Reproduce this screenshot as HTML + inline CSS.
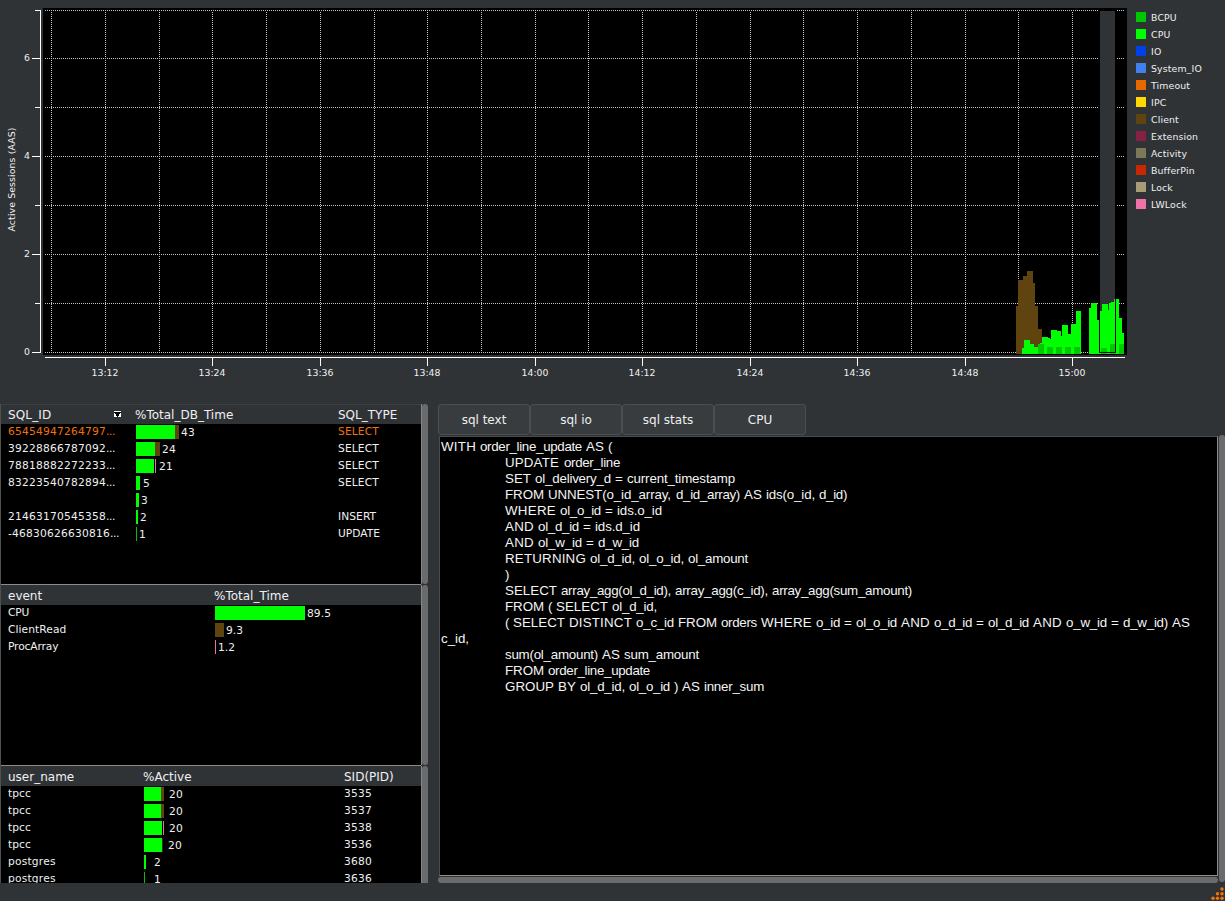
<!DOCTYPE html><html><head><meta charset="utf-8"><title>PASH Viewer</title><style>

html,body{margin:0;padding:0;}
body{width:1225px;height:901px;overflow:hidden;background:#2f3336;position:relative;
 font-family:"DejaVu Sans","Liberation Sans",sans-serif;color:#eff0f1;}
.abs{position:absolute;}
#chart{position:absolute;left:0;top:0;}
svg text{font-family:"DejaVu Sans","Liberation Sans",sans-serif;fill:#eff0f1;}
.panel{position:absolute;left:0;width:421px;overflow:hidden;background:#000;}
.hdr{position:absolute;left:1px;right:0;top:0;background:#2f3336;font-size:12px;white-space:nowrap;}
.hdr span{position:absolute;top:1px;}
.row{position:absolute;left:0;width:421px;height:17px;font-size:10.67px;white-space:nowrap;}
.row span{position:absolute;top:0;line-height:17px;}
.row i{position:absolute;top:1px;height:14px;display:block;}
.sel span{color:#f0700a;}
.tab{position:absolute;top:404px;width:90px;height:29px;border:1px solid #4b4f52;border-radius:3px;background:#383c3f;
 font-size:12px;line-height:31px;text-align:center;}
#sql{position:absolute;left:439px;top:436px;width:777px;height:438px;border:1px solid #4b4c4d;border-right-color:#8c8d8e;border-bottom-color:#8c8d8e;background:#000;overflow:hidden;}
#sql b{position:absolute;top:0;font-weight:normal;white-space:pre;}
#sql div{position:absolute;left:1px;width:776px;white-space:pre;font-family:"Liberation Sans",sans-serif;font-size:13.33px;line-height:16px;height:16px;color:#f4f4f4;}

</style></head><body>
<svg id="chart" width="1225" height="400" viewBox="0 0 1225 400" shape-rendering="crispEdges">
<rect x="43" y="8" width="1084" height="347" fill="#000"/>
<line x1="45" x2="1125" y1="10.5" y2="10.5" stroke="#c4c4c4" stroke-width="1" stroke-dasharray="1 1"/>
<line x1="45" x2="1125" y1="58.5" y2="58.5" stroke="#c4c4c4" stroke-width="1" stroke-dasharray="1 1"/>
<line x1="45" x2="1125" y1="107.5" y2="107.5" stroke="#c4c4c4" stroke-width="1" stroke-dasharray="1 1"/>
<line x1="45" x2="1125" y1="156.5" y2="156.5" stroke="#c4c4c4" stroke-width="1" stroke-dasharray="1 1"/>
<line x1="45" x2="1125" y1="205.5" y2="205.5" stroke="#c4c4c4" stroke-width="1" stroke-dasharray="1 1"/>
<line x1="45" x2="1125" y1="254.5" y2="254.5" stroke="#c4c4c4" stroke-width="1" stroke-dasharray="1 1"/>
<line x1="45" x2="1125" y1="303.5" y2="303.5" stroke="#c4c4c4" stroke-width="1" stroke-dasharray="1 1"/>
<line x1="45" x2="1125" y1="352.5" y2="352.5" stroke="#c4c4c4" stroke-width="1" stroke-dasharray="1 1"/>
<line x1="51.5" x2="51.5" y1="12" y2="351" stroke="#c4c4c4" stroke-width="1" stroke-dasharray="1 1"/>
<line x1="105.5" x2="105.5" y1="12" y2="351" stroke="#c4c4c4" stroke-width="1" stroke-dasharray="1 1"/>
<line x1="159.5" x2="159.5" y1="12" y2="351" stroke="#c4c4c4" stroke-width="1" stroke-dasharray="1 1"/>
<line x1="212.5" x2="212.5" y1="12" y2="351" stroke="#c4c4c4" stroke-width="1" stroke-dasharray="1 1"/>
<line x1="266.5" x2="266.5" y1="12" y2="351" stroke="#c4c4c4" stroke-width="1" stroke-dasharray="1 1"/>
<line x1="320.5" x2="320.5" y1="12" y2="351" stroke="#c4c4c4" stroke-width="1" stroke-dasharray="1 1"/>
<line x1="374.5" x2="374.5" y1="12" y2="351" stroke="#c4c4c4" stroke-width="1" stroke-dasharray="1 1"/>
<line x1="427.5" x2="427.5" y1="12" y2="351" stroke="#c4c4c4" stroke-width="1" stroke-dasharray="1 1"/>
<line x1="481.5" x2="481.5" y1="12" y2="351" stroke="#c4c4c4" stroke-width="1" stroke-dasharray="1 1"/>
<line x1="535.5" x2="535.5" y1="12" y2="351" stroke="#c4c4c4" stroke-width="1" stroke-dasharray="1 1"/>
<line x1="588.5" x2="588.5" y1="12" y2="351" stroke="#c4c4c4" stroke-width="1" stroke-dasharray="1 1"/>
<line x1="642.5" x2="642.5" y1="12" y2="351" stroke="#c4c4c4" stroke-width="1" stroke-dasharray="1 1"/>
<line x1="696.5" x2="696.5" y1="12" y2="351" stroke="#c4c4c4" stroke-width="1" stroke-dasharray="1 1"/>
<line x1="750.5" x2="750.5" y1="12" y2="351" stroke="#c4c4c4" stroke-width="1" stroke-dasharray="1 1"/>
<line x1="803.5" x2="803.5" y1="12" y2="351" stroke="#c4c4c4" stroke-width="1" stroke-dasharray="1 1"/>
<line x1="857.5" x2="857.5" y1="12" y2="351" stroke="#c4c4c4" stroke-width="1" stroke-dasharray="1 1"/>
<line x1="911.5" x2="911.5" y1="12" y2="351" stroke="#c4c4c4" stroke-width="1" stroke-dasharray="1 1"/>
<line x1="965.5" x2="965.5" y1="12" y2="351" stroke="#c4c4c4" stroke-width="1" stroke-dasharray="1 1"/>
<line x1="1018.5" x2="1018.5" y1="12" y2="351" stroke="#c4c4c4" stroke-width="1" stroke-dasharray="1 1"/>
<line x1="1072.5" x2="1072.5" y1="12" y2="351" stroke="#c4c4c4" stroke-width="1" stroke-dasharray="1 1"/>
<rect x="1099" y="10" width="17" height="343" fill="#000"/>
<rect x="1100" y="11" width="15" height="341" fill="#2f3336"/>
<polygon points="1016,354 1016,306 1018,306 1018,280 1023,280 1023,276 1027,276 1027,271 1033,271 1033,283 1035,283 1035,306 1038,306 1038,329 1042,329 1042,354" fill="#5f4410"/>
<polygon points="1022,354 1022,348 1024,348 1024,340 1030,340 1030,344 1034,344 1034,347 1038,347 1038,344 1040,344 1040,343 1042,343 1042,337 1048,337 1048,338 1050,338 1050,339 1051,339 1051,330 1057,330 1057,331 1061,331 1061,336 1062,336 1062,325 1068,325 1068,334 1071,334 1071,324 1076,324 1076,311 1081,311 1081,354" fill="#00ff00"/>
<polygon points="1089,354 1089,308 1091,308 1091,303 1097,303 1097,320 1100,320 1100,311 1102,311 1102,304 1108,304 1108,310 1109,310 1109,303 1111,303 1111,302 1114,302 1114,299 1119,299 1119,318 1122,318 1122,333 1124,333 1124,354" fill="#00ff00"/>
<rect x="1038" y="344" width="6" height="10" fill="#00c800"/>
<rect x="1047" y="347" width="6" height="7" fill="#00c800"/>
<rect x="1056" y="347" width="6" height="7" fill="#00c800"/>
<rect x="1065" y="347" width="6" height="7" fill="#00c800"/>
<rect x="1074" y="347" width="6" height="7" fill="#00c800"/>
<rect x="1101" y="348" width="6" height="6" fill="#00c800"/>
<rect x="1110" y="344" width="5" height="10" fill="#00c800"/>
<rect x="1119" y="344" width="5" height="10" fill="#00c800"/>
<rect x="1099" y="300" width="1" height="53" fill="#000"/>
<rect x="1115" y="295" width="1" height="58" fill="#000"/>
<rect x="1099" y="352" width="17" height="1" fill="#000"/>
<rect x="40" y="10" width="1" height="343" fill="#ffffff"/>
<rect x="35" y="10" width="5" height="1" fill="#ffffff"/>
<rect x="32" y="58" width="8" height="1" fill="#ffffff"/>
<rect x="35" y="107" width="5" height="1" fill="#ffffff"/>
<rect x="32" y="156" width="8" height="1" fill="#ffffff"/>
<rect x="35" y="205" width="5" height="1" fill="#ffffff"/>
<rect x="32" y="254" width="8" height="1" fill="#ffffff"/>
<rect x="35" y="303" width="5" height="1" fill="#ffffff"/>
<rect x="32" y="352" width="8" height="1" fill="#ffffff"/>
<rect x="45" y="357" width="1080" height="1" fill="#ffffff"/>
<rect x="105" y="357" width="1" height="9" fill="#ffffff"/>
<text x="105.0" y="376" font-size="9.33" letter-spacing="0.03" text-anchor="middle">13:12</text>
<rect x="212" y="357" width="1" height="9" fill="#ffffff"/>
<text x="212.0" y="376" font-size="9.33" letter-spacing="0.03" text-anchor="middle">13:24</text>
<rect x="320" y="357" width="1" height="9" fill="#ffffff"/>
<text x="320.0" y="376" font-size="9.33" letter-spacing="0.03" text-anchor="middle">13:36</text>
<rect x="427" y="357" width="1" height="9" fill="#ffffff"/>
<text x="427.0" y="376" font-size="9.33" letter-spacing="0.03" text-anchor="middle">13:48</text>
<rect x="535" y="357" width="1" height="9" fill="#ffffff"/>
<text x="535.0" y="376" font-size="9.33" letter-spacing="0.03" text-anchor="middle">14:00</text>
<rect x="642" y="357" width="1" height="9" fill="#ffffff"/>
<text x="642.0" y="376" font-size="9.33" letter-spacing="0.03" text-anchor="middle">14:12</text>
<rect x="750" y="357" width="1" height="9" fill="#ffffff"/>
<text x="750.0" y="376" font-size="9.33" letter-spacing="0.03" text-anchor="middle">14:24</text>
<rect x="857" y="357" width="1" height="9" fill="#ffffff"/>
<text x="857.0" y="376" font-size="9.33" letter-spacing="0.03" text-anchor="middle">14:36</text>
<rect x="965" y="357" width="1" height="9" fill="#ffffff"/>
<text x="965.0" y="376" font-size="9.33" letter-spacing="0.03" text-anchor="middle">14:48</text>
<rect x="1072" y="357" width="1" height="9" fill="#ffffff"/>
<text x="1072.0" y="376" font-size="9.33" letter-spacing="0.03" text-anchor="middle">15:00</text>
<text x="30" y="61" font-size="9.33" text-anchor="end">6</text>
<text x="30" y="159" font-size="9.33" text-anchor="end">4</text>
<text x="30" y="257" font-size="9.33" text-anchor="end">2</text>
<text x="30" y="355" font-size="9.33" text-anchor="end">0</text>
<text transform="translate(14.5,179.5) rotate(-90)" font-size="9.33" letter-spacing="0.12" text-anchor="middle">Active Sessions (AAS)</text>
<rect x="1136" y="12" width="10" height="10" fill="#00c800"/>
<text x="1151" y="21" font-size="9.33" letter-spacing="0.15">BCPU</text>
<rect x="1136" y="29" width="10" height="10" fill="#00ff00"/>
<text x="1151" y="38" font-size="9.33" letter-spacing="0.15">CPU</text>
<rect x="1136" y="46" width="10" height="10" fill="#0040e8"/>
<text x="1151" y="55" font-size="9.33" letter-spacing="0.15">IO</text>
<rect x="1136" y="63" width="10" height="10" fill="#4080f0"/>
<text x="1151" y="72" font-size="9.33" letter-spacing="0.15">System_IO</text>
<rect x="1136" y="80" width="10" height="10" fill="#e86800"/>
<text x="1151" y="89" font-size="9.33" letter-spacing="0.15">Timeout</text>
<rect x="1136" y="97" width="10" height="10" fill="#ffd800"/>
<text x="1151" y="106" font-size="9.33" letter-spacing="0.15">IPC</text>
<rect x="1136" y="114" width="10" height="10" fill="#5f4410"/>
<text x="1151" y="123" font-size="9.33" letter-spacing="0.15">Client</text>
<rect x="1136" y="131" width="10" height="10" fill="#882045"/>
<text x="1151" y="140" font-size="9.33" letter-spacing="0.15">Extension</text>
<rect x="1136" y="148" width="10" height="10" fill="#7a7a58"/>
<text x="1151" y="157" font-size="9.33" letter-spacing="0.15">Activity</text>
<rect x="1136" y="165" width="10" height="10" fill="#c82800"/>
<text x="1151" y="174" font-size="9.33" letter-spacing="0.15">BufferPin</text>
<rect x="1136" y="182" width="10" height="10" fill="#a89c78"/>
<text x="1151" y="191" font-size="9.33" letter-spacing="0.15">Lock</text>
<rect x="1136" y="199" width="10" height="10" fill="#f070a8"/>
<text x="1151" y="208" font-size="9.33" letter-spacing="0.15">LWLock</text>
</svg>
<div class="abs" style="left:0;top:404px;width:421px;height:1px;background:#3d4043"></div>
<div class="panel" style="top:405px;height:179px;">
<div class="hdr" style="height:19px;line-height:19px;"><span style="left:7px"><u style="text-decoration:none;letter-spacing:0.15px">SQL_ID</u></span><span style="left:134px">%Total_DB_Time</span><span style="left:337px">SQL_TYPE</span>
<svg class="abs" style="left:113px;top:6px" width="7" height="6" viewBox="0 0 7 6" shape-rendering="crispEdges"><rect width="7" height="6" fill="#fff"/><polygon points="0,1 7,1 3.5,6" fill="#000"/></svg>
</div>
<div class="row sel" style="top:19px">
<span style="left:8px;top:-1px;letter-spacing:0.213px">65454947264797<u style="text-decoration:none;letter-spacing:-0.391px">...</u></span>
<i style="left:136px;width:39px;background:#00ff00"></i>
<i style="left:175px;width:4px;background:#5f4410"></i>
<span style="left:181px;color:#eff0f1;letter-spacing:0.213px">43</span>
<span style="left:338px;top:-1px;letter-spacing:0.140px">SELECT</span>
</div>
<div class="row" style="top:36px">
<span style="left:8px;top:-1px;letter-spacing:0.213px">39228866787092<u style="text-decoration:none;letter-spacing:-0.391px">...</u></span>
<i style="left:136px;width:19px;background:#00ff00"></i>
<i style="left:155px;width:5px;background:#5f4410"></i>
<span style="left:162px;color:#eff0f1;letter-spacing:0.213px">24</span>
<span style="left:338px;top:-1px;letter-spacing:0.140px">SELECT</span>
</div>
<div class="row" style="top:53px">
<span style="left:8px;top:-1px;letter-spacing:0.213px">78818882272233<u style="text-decoration:none;letter-spacing:-0.391px">...</u></span>
<i style="left:136px;width:18px;background:#00ff00"></i>
<i style="left:155px;width:1px;background:#f06ea0"></i>
<span style="left:159px;color:#eff0f1;letter-spacing:0.213px">21</span>
<span style="left:338px;top:-1px;letter-spacing:0.140px">SELECT</span>
</div>
<div class="row" style="top:70px">
<span style="left:8px;top:-1px;letter-spacing:0.213px">83223540782894<u style="text-decoration:none;letter-spacing:-0.391px">...</u></span>
<i style="left:136px;width:4px;background:#00ff00"></i>
<span style="left:143px;color:#eff0f1;letter-spacing:0.213px">5</span>
<span style="left:338px;top:-1px;letter-spacing:0.140px">SELECT</span>
</div>
<div class="row" style="top:87px">
<span style="left:8px;top:-1px;letter-spacing:0.000px"></span>
<i style="left:136px;width:3px;background:#00ff00"></i>
<span style="left:141px;color:#eff0f1;letter-spacing:0.213px">3</span>
<span style="left:338px;top:-1px;letter-spacing:0.000px"></span>
</div>
<div class="row" style="top:104px">
<span style="left:8px;top:-1px;letter-spacing:0.213px">21463170545358<u style="text-decoration:none;letter-spacing:-0.391px">...</u></span>
<i style="left:136px;width:2px;background:#00ff00"></i>
<span style="left:140px;color:#eff0f1;letter-spacing:0.213px">2</span>
<span style="left:338px;top:-1px;letter-spacing:0.073px">INSERT</span>
</div>
<div class="row" style="top:121px">
<span style="left:8px;top:-1px;letter-spacing:0.209px">-46830626630816<u style="text-decoration:none;letter-spacing:-0.391px">...</u></span>
<i style="left:136px;width:1px;background:#00c000"></i>
<span style="left:139px;color:#eff0f1;letter-spacing:0.213px">1</span>
<span style="left:338px;top:-1px;letter-spacing:-0.001px">UPDATE</span>
</div>
</div>
<div class="abs" style="left:0;top:584px;width:421px;height:1px;background:#8a8b8c"></div>
<div class="panel" style="top:585px;height:180px;">
<div class="hdr" style="height:20px;line-height:20px;"><span style="left:7px">event</span><span style="left:213px">%Total_Time</span></div>
<div class="row" style="top:20px">
<span style="left:8px;top:-1px;letter-spacing:-0.229px">CPU</span>
<i style="left:215px;width:90px;background:#00ff00"></i>
<span style="left:307px;letter-spacing:0.062px">89.5</span>
</div>
<div class="row" style="top:37px">
<span style="left:8px;top:-1px;letter-spacing:0.084px">ClientRead</span>
<i style="left:215px;width:9px;background:#5f4410"></i>
<span style="left:226px;letter-spacing:0.012px">9.3</span>
</div>
<div class="row" style="top:54px">
<span style="left:8px;top:-1px;letter-spacing:-0.125px">ProcArray</span>
<i style="left:215px;width:1px;background:#f06ea0"></i>
<span style="left:218px;letter-spacing:0.012px">1.2</span>
</div>
</div>
<div class="abs" style="left:0;top:765px;width:421px;height:1px;background:#8a8b8c"></div>
<div class="panel" style="top:766px;height:117px;">
<div class="hdr" style="height:20px;line-height:20px;"><span style="left:7px">user_name</span><span style="left:142px">%Active</span><span style="left:343px">SID(PID)</span></div>
<div class="row" style="top:20px">
<span style="left:8px;top:-1px;letter-spacing:0.079px">tpcc</span>
<i style="left:144px;width:17px;background:#00ff00"></i>
<i style="left:161px;width:3px;background:#5f4410"></i>
<span style="left:169px;letter-spacing:0.213px">20</span>
<span style="left:344px;top:-1px;letter-spacing:0.213px">3535</span>
</div>
<div class="row" style="top:37px">
<span style="left:8px;top:-1px;letter-spacing:0.079px">tpcc</span>
<i style="left:144px;width:17px;background:#00ff00"></i>
<i style="left:161px;width:3px;background:#5f4410"></i>
<span style="left:169px;letter-spacing:0.213px">20</span>
<span style="left:344px;top:-1px;letter-spacing:0.213px">3537</span>
</div>
<div class="row" style="top:54px">
<span style="left:8px;top:-1px;letter-spacing:0.079px">tpcc</span>
<i style="left:144px;width:18px;background:#00ff00"></i>
<i style="left:163px;width:1px;background:#f06ea0"></i>
<span style="left:169px;letter-spacing:0.213px">20</span>
<span style="left:344px;top:-1px;letter-spacing:0.213px">3538</span>
</div>
<div class="row" style="top:71px">
<span style="left:8px;top:-1px;letter-spacing:0.079px">tpcc</span>
<i style="left:144px;width:18px;background:#00ff00"></i>
<i style="left:162px;width:1px;background:#3a2a08"></i>
<span style="left:168px;letter-spacing:0.213px">20</span>
<span style="left:344px;top:-1px;letter-spacing:0.213px">3536</span>
</div>
<div class="row" style="top:88px">
<span style="left:8px;top:-1px;letter-spacing:0.211px">postgres</span>
<i style="left:144px;width:2px;background:#00ff00"></i>
<span style="left:154px;letter-spacing:0.213px">2</span>
<span style="left:344px;top:-1px;letter-spacing:0.213px">3680</span>
</div>
<div class="row" style="top:105px">
<span style="left:8px;top:-1px;letter-spacing:0.211px">postgres</span>
<i style="left:144px;width:1px;background:#00c000"></i>
<span style="left:154px;letter-spacing:0.213px">1</span>
<span style="left:344px;top:-1px;letter-spacing:0.213px">3636</span>
</div>
</div>
<div class="abs" style="left:0;top:404px;width:1px;height:479px;background:#4d4f50"></div>
<div class="abs" style="left:421px;top:404px;width:1px;height:180px;background:#858687"></div>
<div class="abs" style="left:422px;top:404px;width:6px;height:180px;background:#6a6b6d;border-radius:3px"></div>
<div class="abs" style="left:421px;top:585px;width:1px;height:180px;background:#858687"></div>
<div class="abs" style="left:422px;top:585px;width:6px;height:180px;background:#6a6b6d;border-radius:3px"></div>
<div class="abs" style="left:421px;top:766px;width:1px;height:117px;background:#858687"></div>
<div class="abs" style="left:422px;top:766px;width:6px;height:117px;background:#6a6b6d;border-radius:3px 3px 0 0"></div>
<div class="tab" style="left:438px">sql text</div>
<div class="tab" style="left:530px">sql io</div>
<div class="tab" style="left:622px">sql stats</div>
<div class="tab" style="left:714px">CPU</div>
<div id="sql">
<div id="L0" style="top:2px"><b style="left:0px;letter-spacing:0.235px">WITH</b><b style="left:39px;letter-spacing:-0.323px">order_line_update</b><b style="left:145px;letter-spacing:0.107px">AS</b><b style="left:167px;letter-spacing:-0.440px">(</b></div>
<div id="L1" style="top:18px"><b style="left:64px;letter-spacing:0.153px">UPDATE</b><b style="left:123px;letter-spacing:-0.330px">order_line</b></div>
<div id="L2" style="top:34px"><b style="left:64px;letter-spacing:0.023px">SET</b><b style="left:94px;letter-spacing:-0.197px">ol_delivery_d</b><b style="left:174px;letter-spacing:0.214px">=</b><b style="left:186px;letter-spacing:-0.142px">current_timestamp</b></div>
<div id="L3" style="top:50px"><b style="left:64px;letter-spacing:-0.063px">FROM</b><b style="left:107px;letter-spacing:-0.109px">UNNEST(o_id_array,</b><b style="left:235px;letter-spacing:-0.313px">d_id_array)</b><b style="left:303px;letter-spacing:0.107px">AS</b><b style="left:325px;letter-spacing:-0.155px">ids(o_id,</b><b style="left:378px;letter-spacing:-0.330px">d_id)</b></div>
<div id="L4" style="top:66px"><b style="left:64px;letter-spacing:0.274px">WHERE</b><b style="left:119px;letter-spacing:-0.286px">ol_o_id</b><b style="left:164px;letter-spacing:0.214px">=</b><b style="left:176px;letter-spacing:-0.119px">ids.o_id</b></div>
<div id="L5" style="top:82px"><b style="left:64px;letter-spacing:0.283px">AND</b><b style="left:97px;letter-spacing:-0.286px">ol_d_id</b><b style="left:142px;letter-spacing:0.214px">=</b><b style="left:154px;letter-spacing:-0.119px">ids.d_id</b></div>
<div id="L6" style="top:98px"><b style="left:64px;letter-spacing:0.283px">AND</b><b style="left:97px;letter-spacing:-0.173px">ol_w_id</b><b style="left:145px;letter-spacing:0.214px">=</b><b style="left:157px;letter-spacing:-0.209px">d_w_id</b></div>
<div id="L7" style="top:114px"><b style="left:64px;letter-spacing:0.194px">RETURNING</b><b style="left:149px;letter-spacing:-0.213px">ol_d_id,</b><b style="left:198px;letter-spacing:-0.213px">ol_o_id,</b><b style="left:247px;letter-spacing:-0.252px">ol_amount</b></div>
<div id="L8" style="top:130px"><b style="left:64px;letter-spacing:-0.440px">)</b></div>
<div id="L9" style="top:146px"><b style="left:64px;letter-spacing:0.022px">SELECT</b><b style="left:120px;letter-spacing:-0.296px">array_agg(ol_d_id),</b><b style="left:234px;letter-spacing:-0.255px">array_agg(c_id),</b><b style="left:331px;letter-spacing:-0.285px">array_agg(sum_amount)</b></div>
<div id="L10" style="top:162px"><b style="left:64px;letter-spacing:-0.063px">FROM</b><b style="left:107px;letter-spacing:-0.440px">(</b><b style="left:115px;letter-spacing:0.022px">SELECT</b><b style="left:171px;letter-spacing:-0.213px">ol_d_id,</b></div>
<div id="L11" style="top:178px"><b style="left:64px;letter-spacing:-0.440px">(</b><b style="left:72px;letter-spacing:0.022px">SELECT</b><b style="left:128px;letter-spacing:0.190px">DISTINCT</b><b style="left:195px;letter-spacing:-0.215px">o_c_id</b><b style="left:237px;letter-spacing:-0.063px">FROM</b><b style="left:280px;letter-spacing:-0.299px">orders</b><b style="left:320px;letter-spacing:0.274px">WHERE</b><b style="left:375px;letter-spacing:-0.302px">o_id</b><b style="left:403px;letter-spacing:0.214px">=</b><b style="left:415px;letter-spacing:-0.286px">ol_o_id</b><b style="left:460px;letter-spacing:0.283px">AND</b><b style="left:493px;letter-spacing:-0.340px">o_d_id</b><b style="left:535px;letter-spacing:0.214px">=</b><b style="left:547px;letter-spacing:-0.286px">ol_d_id</b><b style="left:592px;letter-spacing:0.283px">AND</b><b style="left:625px;letter-spacing:-0.209px">o_w_id</b><b style="left:670px;letter-spacing:0.214px">=</b><b style="left:682px;letter-spacing:-0.242px">d_w_id)</b><b style="left:731px;letter-spacing:0.107px">AS</b></div>
<div id="L12" style="top:194px"><b style="left:0px;letter-spacing:-0.033px">c_id,</b></div>
<div id="L13" style="top:210px"><b style="left:64px;letter-spacing:-0.238px">sum(ol_amount)</b><b style="left:161px;letter-spacing:0.107px">AS</b><b style="left:183px;letter-spacing:-0.207px">sum_amount</b></div>
<div id="L14" style="top:226px"><b style="left:64px;letter-spacing:-0.063px">FROM</b><b style="left:107px;letter-spacing:-0.323px">order_line_update</b></div>
<div id="L15" style="top:242px"><b style="left:64px;letter-spacing:0.022px">GROUP</b><b style="left:117px;letter-spacing:0.107px">BY</b><b style="left:139px;letter-spacing:-0.213px">ol_d_id,</b><b style="left:188px;letter-spacing:-0.286px">ol_o_id</b><b style="left:233px;letter-spacing:-0.440px">)</b><b style="left:241px;letter-spacing:0.107px">AS</b><b style="left:263px;letter-spacing:-0.250px">inner_sum</b></div>
</div>
<div class="abs" style="left:1219px;top:435px;width:6px;height:447px;background:#6a6b6d;border-radius:3px"></div>
<div class="abs" style="left:438px;top:877px;width:780px;height:6px;background:#6a6b6d;border-radius:3px"></div>
<svg class="abs" style="left:1209px;top:885px" width="16" height="16" viewBox="0 0 16 16">
<circle cx="13" cy="4" r="1.7" fill="#f67400"/>
<circle cx="8.5" cy="8.7" r="1.7" fill="#f67400"/>
<circle cx="13" cy="8.7" r="1.7" fill="#f67400"/>
<circle cx="4" cy="13.2" r="1.7" fill="#f67400"/>
<circle cx="8.5" cy="13.2" r="1.7" fill="#f67400"/>
<circle cx="13" cy="13.2" r="1.7" fill="#f67400"/>
</svg>
</body></html>
